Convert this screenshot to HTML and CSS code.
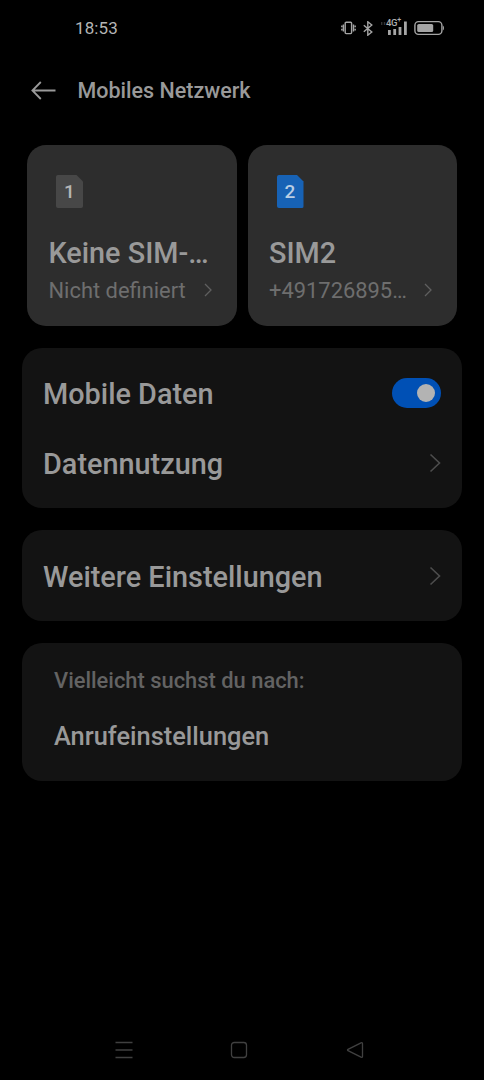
FILE: index.html
```html
<!DOCTYPE html>
<html lang="de">
<head>
    <meta charset="UTF-8">
    <meta name="viewport" content="width=device-width, initial-scale=1.0">
    <title>Mobiles Netzwerk</title>
    <link rel="stylesheet" href="styles.css">
</head>
<body>
    <div class="status-bar">
        <span class="time">18:53</span>
        <div class="status-icons">
            <svg class="vibrate" width="15" height="14" viewBox="0 0 15 14">
                <rect x="4.2" y="1.2" width="6.4" height="11.4" rx="1" />
                <path d="M2.4 3.5v7M12.5 3.5v7M.8 4.4v1.8M.8 7.8v1.8M14.2 4.4v1.8M14.2 7.8v1.8" />
            </svg>
            <svg class="bluetooth" width="10" height="15" viewBox="0 0 10 15">
                <path d="M.8 4.2L8.8 11 4.8 14.2V.8L8.8 4 .8 10.8" />
            </svg>
            <div class="signal">
                <span>4G<sup>+</sup></span>
                <svg width="28" height="16" viewBox="0 0 28 16">
                    <path class="faint" d="M1 3.5h1.4M3.8 3.5h1.4" />
                    <path d="M9.4 10v5M14.7 9v6M20 7v8M25.4 1.5v13.5" />
                </svg>
            </div>
            <svg class="battery" width="31" height="16" viewBox="0 0 31 16">
                <rect class="outline" x=".9" y="1.6" width="27" height="12.8" rx="3.6" />
                <rect class="level" x="3.2" y="4" width="16" height="8" rx="1.6" />
                <path class="level" d="M28.9 5.5q1.1 .6 1.1 2.5t-1.1 2.5z" />
            </svg>
        </div>
    </div>

    <header class="header">
        <svg width="25" height="19" viewBox="0 0 25 19">
            <path d="M24.5 9.5H1.4M9.8 1L1.4 9.5l8.4 8.5" />
        </svg>
        <h1>Mobiles Netzwerk</h1>
    </header>

    <main>
        <div class="sim-cards">
            <div class="sim-card">
                <div class="sim-icon">1</div>
                <h2>Keine SIM-…</h2>
                <div class="sim-info">
                    <span>Nicht definiert</span>
                    <svg width="8" height="14" viewBox="0 0 8 14"><path d="M1 1l6 6-6 6" /></svg>
                </div>
            </div>
            <div class="sim-card">
                <div class="sim-icon active">2</div>
                <h2>SIM2</h2>
                <div class="sim-info">
                    <span>+491726895…</span>
                    <svg width="8" height="14" viewBox="0 0 8 14"><path d="M1 1l6 6-6 6" /></svg>
                </div>
            </div>
        </div>

        <div class="panel">
            <div class="row">
                <span>Mobile Daten</span>
                <div class="toggle"></div>
            </div>
            <div class="row">
                <span>Datennutzung</span>
                <svg width="12" height="20" viewBox="0 0 12 20"><path d="M1.5 1.5l9 8.5-9 8.5" /></svg>
            </div>
        </div>

        <div class="panel more">
            <div class="row">
                <span>Weitere Einstellungen</span>
                <svg width="12" height="20" viewBox="0 0 12 20"><path d="M1.5 1.5l9 8.5-9 8.5" /></svg>
            </div>
        </div>

        <div class="panel suggestions">
            <p>Vielleicht suchst du nach:</p>
            <a>Anrufeinstellungen</a>
        </div>
    </main>

    <nav class="nav-bar">
        <svg width="18" height="18" viewBox="0 0 18 18"><path d="M.5 1.5h17M.5 9h17M.5 16.5h17" /></svg>
        <svg width="18" height="18" viewBox="0 0 18 18"><rect x="1.5" y="1.5" width="15" height="15" rx="2.8" /></svg>
        <svg width="18" height="18" viewBox="0 0 18 18"><path d="M15 1.8L2 8.3q-1 .7 0 1.4l13 6.5q1.5 .5 1.5-1V2.8q0-1.5-1.5-1z" /></svg>
    </nav>
</body>
</html>
```

FILE: styles.css
```css
* {
    box-sizing: border-box;
}

body {
    display: flex;
    flex-direction: column;
    height: 100vh;
    margin: 0;
    background-color: #000;
    color: #999;
    font-family: Roboto, sans-serif;
    font-weight: 500;
    overflow: hidden;
}

h1, h2, p {
    margin: 0;
    font-weight: 500;
}

svg {
    display: block;
    flex: none;
    fill: none;
    stroke: #999;
    stroke-width: 1.8;
}

.status-bar {
    display: flex;
    justify-content: space-between;
    align-items: center;
    height: 56px;
    padding: 0 39px 0 75px;
}

.time {
    color: #b5b5b5;
    font-size: 17px;
    font-weight: 400;
    letter-spacing: 0.1px;
}

.status-icons {
    display: flex;
    align-items: center;
}

.status-icons svg {
    stroke: #a5a5a5;
    stroke-width: 1.4;
}

.status-icons .bluetooth {
    margin-left: 7px;
}

.signal {
    position: relative;
    margin: 0 6px 0 7px;
}

.status-icons .signal svg {
    stroke-width: 2.8;
}

.signal .faint {
    stroke: #333;
}

.signal span {
    position: absolute;
    top: -1px;
    left: 6px;
    color: #b0b0b0;
    font-size: 9.5px;
    line-height: 8px;
    letter-spacing: -0.3px;
}

.signal sup {
    font-size: 7px;
    line-height: 0;
}

.battery .level {
    fill: #a5a5a5;
    stroke: none;
}

.header {
    display: flex;
    align-items: center;
    gap: 22px;
    height: 68px;
    padding-left: 30.5px;
}

.header h1 {
    font-size: 21.5px;
}

main {
    display: flex;
    flex: 1;
    flex-direction: column;
    gap: 22px;
    padding: 21px 22px 0;
}

.sim-cards {
    display: grid;
    grid-template-columns: repeat(2, minmax(0, 1fr));
    gap: 11px;
    padding: 0 5px;
}

.sim-card {
    height: 180.5px;
    padding: 30px 22px 0 21.5px;
    border-radius: 19px;
    background-color: #2d2d2d;
}

.sim-icon {
    width: 27px;
    height: 33px;
    margin-left: 7.5px;
    border-radius: 2px;
    background-color: #474747;
    clip-path: polygon(0 0, 76% 0, 100% 20%, 100% 100%, 0 100%);
    color: #b5b5b5;
    font-size: 19px;
    line-height: 34px;
    text-align: center;
}

.sim-icon.active {
    background-color: #1762b5;
    color: #b9cde3;
}

.sim-card h2 {
    margin-top: 28px;
    font-size: 28.8px;
    line-height: 34px;
    white-space: nowrap;
}

.sim-info {
    display: flex;
    justify-content: space-between;
    align-items: center;
    height: 40px;
    padding-right: 3px;
    color: #6e6e6e;
    font-size: 21.9px;
    font-weight: 400;
}

.sim-info svg {
    stroke: #5f5f5f;
    stroke-width: 1.3;
}

.panel {
    padding: 11px 21px 9.5px;
    border-radius: 20px;
    background-color: #131313;
}

.row {
    display: flex;
    justify-content: space-between;
    align-items: center;
    height: 70px;
    font-size: 28.85px;
}

.row svg {
    margin-bottom: 2px;
    stroke: #4d4d4d;
    stroke-width: 1.6;
}

.toggle {
    width: 49px;
    height: 30px;
    margin-bottom: 1px;
    padding: 6px;
    border-radius: 15px;
    background-color: #0050b5;
}

.toggle::after {
    content: "";
    display: block;
    width: 18px;
    height: 18px;
    margin-left: auto;
    border-radius: 50%;
    background-color: #b3b3b3;
}

.more {
    padding-top: 12px;
    padding-bottom: 8.5px;
}

.suggestions {
    height: 138px;
    padding: 25px 32px 0;
}

.suggestions p {
    color: #636363;
    font-size: 21.9px;
    line-height: 26px;
}

.suggestions a {
    display: block;
    margin-top: 27px;
    font-size: 25.4px;
    line-height: 30px;
}

.nav-bar {
    display: flex;
    justify-content: space-between;
    height: 39px;
    padding: 0 120.5px 0 114.5px;
}

.nav-bar svg {
    stroke: #404040;
    stroke-width: 1.3;
}
```
